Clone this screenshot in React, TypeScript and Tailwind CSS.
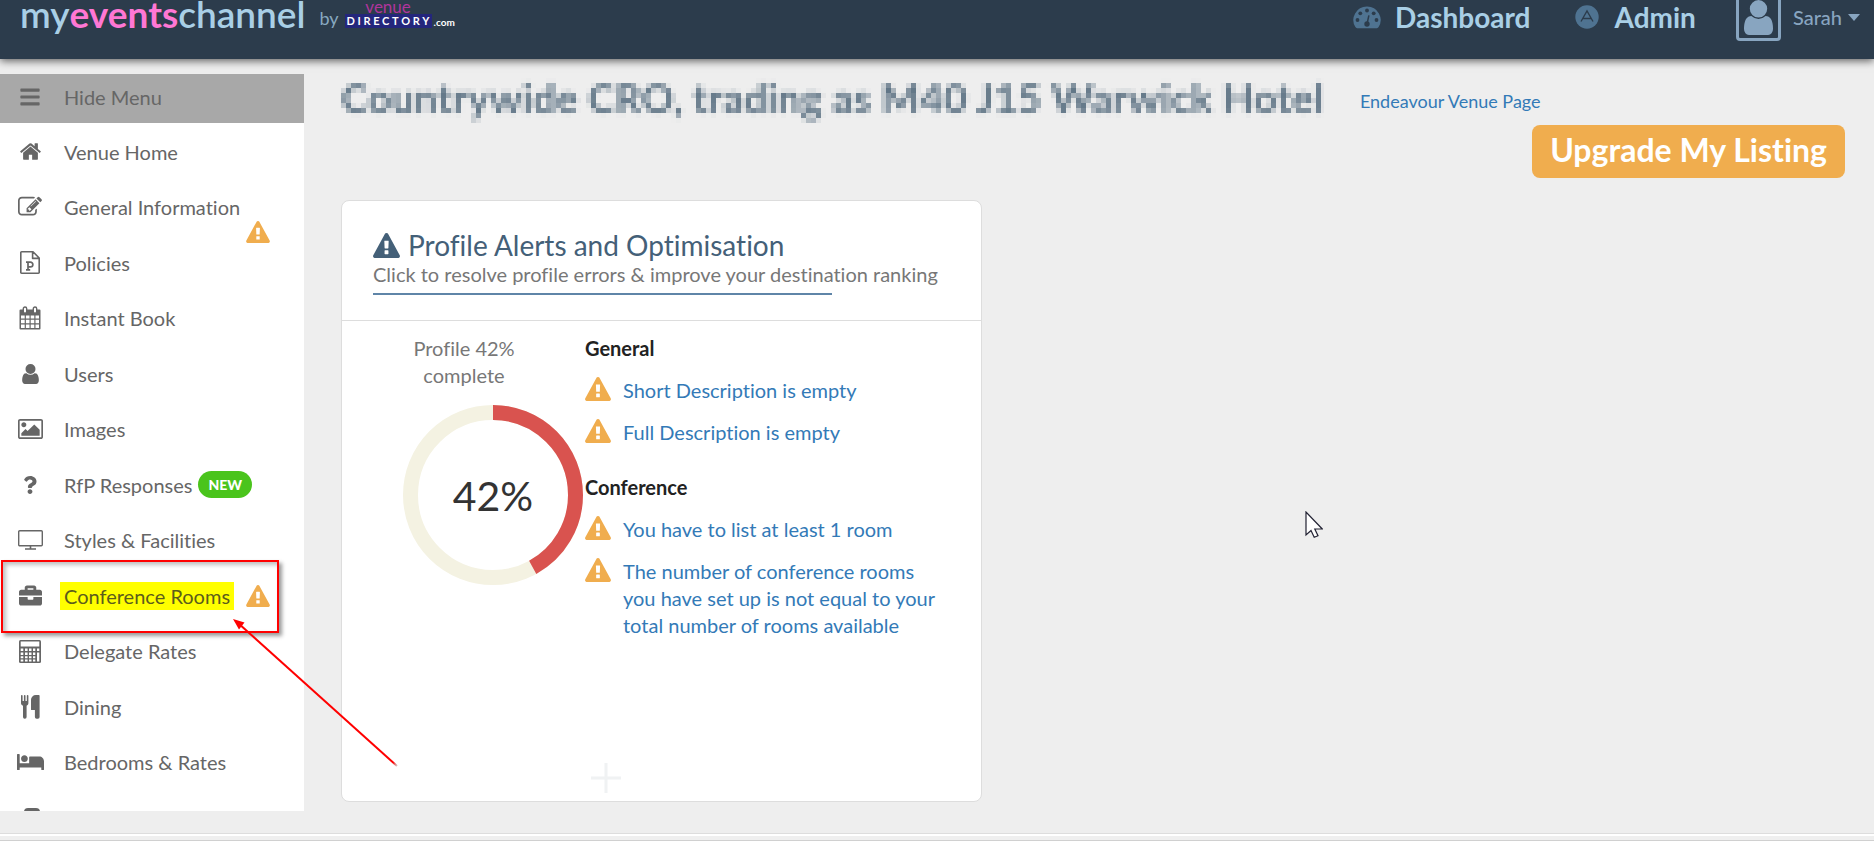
import type { ReactNode } from 'react';
import { FaBars, FaBed, FaBriefcase, FaQuestion } from 'react-icons/fa';

type GlyphProps = { className?: string };

function Warning({ className = '' }: GlyphProps) {
  return (
    <svg viewBox="0 0 1792 1664" fill="currentColor" aria-hidden="true" className={`shrink-0 ${className}`}>
      <path d="M1024 1375v-190q0-14-9.5-23.5t-22.5-9.5h-192q-13 0-22.5 9.5t-9.5 23.5v190q0 14 9.5 23.5t22.5 9.5h192q13 0 22.5-9.5t9.5-23.5zm-2-374l18-459q0-12-10-19-13-11-24-11h-220q-11 0-24 11-10 7-10 21l17 457q0 10 10 16.5t24 6.5h185q14 0 23.5-6.5t10.5-16.5zm-14-934l768 1408q35 63-2 126-17 29-46.5 46t-63.5 17h-1536q-34 0-63.5-17t-46.5-46q-37-63-2-126l768-1408q17-31 47-49t65-18 65 18 47 49z" />
    </svg>
  );
}

function Home() {
  return (
    <svg viewBox="0 0 1792 1792" fill="currentColor" className="size-[23px]">
      <path d="M1472 992v480q0 26-19 45t-45 19h-384v-384h-256v384h-384q-26 0-45-19t-19-45v-480q0-1 .5-3t.5-3l575-474 575 474q1 2 1 6zm223-69l-62 74q-8 9-21 11h-3q-13 0-21-7l-692-577-692 577q-12 8-24 7-13-2-21-11l-62-74q-8-10-7-23.5t11-21.5l719-599q32-26 76-26t76 26l244 204v-195q0-14 9-23t23-9h192q14 0 23 9t9 23v408l219 182q10 8 11 21.5t-7 23.5z" />
    </svg>
  );
}

function Edit() {
  return (
    <svg viewBox="0 0 1792 1792" fill="currentColor" className="size-6">
      <path d="M888 1184l116-116-152-152-116 116v56h96v96h56zm440-720q-16-16-33 1l-350 350q-17 17-1 33t33-1l350-350q17-17 1-33zm80 594v190q0 119-84.5 203.5t-203.5 84.5h-832q-119 0-203.5-84.5t-84.5-203.5v-832q0-119 84.5-203.5t203.5-84.5h832q63 0 117 25 15 7 18 23 3 17-9 29l-49 49q-14 14-32 8-23-6-45-6h-832q-66 0-113 47t-47 113v832q0 66 47 113t113 47h832q66 0 113-47t47-113v-126q0-13 9-22l64-64q15-15 35-7t20 29zm-96-738l288 288-672 672h-288v-288zm444 132l-92 92-288-288 92-92q28-28 68-28t68 28l152 152q28 28 28 68t-28 68z" />
    </svg>
  );
}

function PolicyFile() {
  return (
    <svg viewBox="0 0 20 23" fill="none" stroke="currentColor" strokeWidth="1.6" className="h-[23px] w-5">
      <path d="M1.6.8H13l6.2 6.2v14.4a.8.8 0 0 1-.8.8H1.6a.8.8 0 0 1-.8-.8V1.600a.8.800 0 0 1 .8-.8zM12.600.8v6.6h6.600" strokeLinejoin="round" />
      <path d="M6 11.200h4.500a2.300 2.300 0 0 1 0 4.700H8M8 11.200v7.600M6 18.900h4.200" strokeWidth="1.700" />
    </svg>
  );
}

function CalendarGrid() {
  return (
    <svg viewBox="0 0 22 24" className="h-6 w-[22px]">
      <path d="M1.500 3.500h19a1 1 0 0 1 1 1V22.500a1 1 0 0 1-1 1h-19a1 1 0 0 1-1-1V4.500a1 1 0 0 1 1-1z" fill="currentColor" />
      <path d="M2 9.500h3.700v3H2zM6.900 9.500h3.600v3H6.900zM11.700 9.500h3.600v3h-3.600zM16.500 9.500H20v3h-3.500zM2 13.800h3.700v3.400H2zM6.900 13.800h3.600v3.400H6.900zM11.700 13.800h3.600v3.400h-3.600zM16.500 13.800H20v3.400h-3.500zM2 18.500h3.700V22H2zM6.900 18.500h3.600V22H6.900zM11.700 18.500h3.600V22h-3.600zM16.500 18.500H20V22h-3.500z" fill="#fff" />
      <rect x="4.300" y="1" width="3.400" height="6.200" rx="1.700" fill="#fff" stroke="currentColor" strokeWidth="1.400" />
      <rect x="14.300" y="1" width="3.400" height="6.200" rx="1.700" fill="#fff" stroke="currentColor" strokeWidth="1.400" />
    </svg>
  );
}

function Person({ className = '' }: GlyphProps) {
  return (
    <svg viewBox="256 128 1280 1536" fill="currentColor" className={className}>
      <path d="M1536 1399q0 109-62.500 187t-150.500 78h-854q-88 0-150.500-78t-62.500-187q0-85 8.500-160.500t31.500-152 58.500-131 94-89 134.500-34.500q131 128 313 128t313-128q76 0 134.500 34.500t94 89 58.500 131 31.500 152 8.500 160.500zm-256-887q0 159-112.500 271.500t-271.500 112.500-271.500-112.500-112.500-271.500 112.500-271.500 271.500-112.500 271.500 112.500 112.500 271.500z" />
    </svg>
  );
}

function Picture() {
  return (
    <svg viewBox="-64 128 1920 1536" fill="currentColor" className="h-5 w-[25px]">
      <path d="M576 576q0 80-56 136t-136 56-136-56-56-136 56-136 136-56 136 56 56 136zm1024 384v448h-1408v-192l320-320 160 160 512-512zm96-704h-1600q-13 0-22.500 9.500t-9.500 22.500v1216q0 13 9.500 22.500t22.500 9.500h1600q13 0 22.500-9.500t9.500-22.500v-1216q0-13-9.500-22.500t-22.500-9.500zm160 32v1216q0 66-47 113t-113 47h-1600q-66 0-113-47t-47-113v-1216q0-66 47-113t113-47h1600q66 0 113 47t47 113z" />
    </svg>
  );
}

function Screen() {
  return (
    <svg viewBox="0 0 25 20" fill="none" stroke="currentColor" className="h-5 w-[25px]">
      <rect x=".7" y=".7" width="23.600" height="15" rx="1" strokeWidth="1.400" />
      <path d="M12.500 16v2.500M7 19h11" strokeWidth="1.600" />
    </svg>
  );
}

function CalculatorGlyph() {
  return (
    <svg viewBox="0 0 22 23" className="h-[23px] w-[22px]">
      <rect x="0" y="0" width="22" height="23" rx="1.500" fill="currentColor" />
      <path d="M1.700 1.600h18.600v5H1.700zM1.700 8.600h2.600v2.300H1.700zM6 8.600h2.600v2.300H6zM10 8.600h2.500v2.300H10zM14 8.600h2.300v2.300H14zM18 8.600h2.300v2.300H18zM1.700 12.600h2.600v2.300H1.700zM6 12.600h2.600v2.300H6zM10 12.600h2.500v2.300H10zM14 12.600h2.300v2.300H14zM1.700 16.200h2.600v2H1.700zM6 16.200h2.600v2H6zM10 16.200h2.500v2H10zM14 16.200h2.300v2H14zM1.700 19.600h2.600v2H1.700zM6 19.600h2.600v2H6zM10 19.600h2.500v2H10zM14 19.600h2.300v2H14zM18 12.600h2.300v9H18z" fill="#fff" />
    </svg>
  );
}

function Cutlery() {
  return (
    <svg viewBox="0 0 19 24" fill="currentColor" className="h-6 w-[19px]">
      <path d="M0 .8a.8.8 0 0 1 1.600 0V6h1.300V.8a.8.800 0 0 1 1.600 0V6h1.300V.8a.8.800 0 0 1 1.600 0v7.400c0 1.200-.8 2-1.800 2.500v11.400a1.700 1.700 0 0 1-1.700 1.700h-.2a1.700 1.700 0 0 1-1.700-1.700V10.700C.8 10.200 0 9.400 0 8.200zM18.600.8v21.300a1.700 1.700 0 0 1-1.700 1.700h-1.300a1.700 1.700 0 0 1-1.700-1.700v-7h-3.300a.6.600 0 0 1-.6-.6V4.800A4.800 4.800 0 0 1 14.800 0h3a.8.800 0 0 1 .8.8z" />
    </svg>
  );
}

function Gauge() {
  return (
    <svg viewBox="0 0 28 23" className="h-[23px] w-7">
      <path d="M14 .5a13.500 13.500 0 0 1 11.600 20.600c-.4.700-.9 1.100-1.700 1.100H4.100c-.8 0-1.300-.4-1.700-1.100A13.500 13.500 0 0 1 14 .5z" fill="#4f7391" />
      <g fill="#2c3c4c">
        <circle cx="4.500" cy="14" r="1.900" />
        <circle cx="7.300" cy="7.300" r="1.900" />
        <circle cx="14" cy="4.500" r="1.900" />
        <circle cx="20.700" cy="7.300" r="1.900" />
        <circle cx="23.500" cy="14" r="1.900" />
        <circle cx="14" cy="18" r="2.700" />
      </g>
      <path d="M14 18l1.900-8.600" stroke="#2c3c4c" strokeWidth="1.500" />
    </svg>
  );
}

function AdminBadge() {
  return (
    <svg viewBox="0 0 24 24" className="size-6">
      <circle cx="12" cy="12" r="11.700" fill="#4f7391" />
      <path d="M6 16.500l6-10.500 6 10.500M8 13.500h8" fill="none" stroke="#2c3c4c" strokeWidth="1.400" />
    </svg>
  );
}

type Item = { label: string; icon: ReactNode; alert?: 'inline' | 'below'; isNew?: boolean; marked?: boolean };

const items: Item[] = [
  { label: 'Venue Home', icon: <Home /> },
  { label: 'General Information', icon: <Edit />, alert: 'below' },
  { label: 'Policies', icon: <PolicyFile /> },
  { label: 'Instant Book', icon: <CalendarGrid /> },
  { label: 'Users', icon: <Person className="h-5 w-[17px]" /> },
  { label: 'Images', icon: <Picture /> },
  { label: 'RfP Responses', icon: <FaQuestion className="size-[18px]" />, isNew: true },
  { label: 'Styles & Facilities', icon: <Screen /> },
  { label: 'Conference Rooms', icon: <FaBriefcase className="size-[23px]" />, alert: 'inline', marked: true },
  { label: 'Delegate Rates', icon: <CalculatorGlyph /> },
  { label: 'Dining', icon: <Cutlery /> },
  { label: 'Bedrooms & Rates', icon: <FaBed className="h-[22px] w-[27px]" /> },
];

function Sidebar() {
  return (
    <aside className="relative h-[737px] w-[304px] shrink-0 text-[20px] text-[#666]">
      <div className="h-full overflow-hidden bg-white">
        <button type="button" className="flex h-[49px] w-full items-center bg-[#a8a8a8] pb-1 text-left">
          <span className="ml-2 flex w-11 justify-center">
            <FaBars className="size-[22px]" />
          </span>
          <span className="ml-3">Hide Menu</span>
        </button>
        <ul className="pt-px">
          {items.map((item) => (
            <li key={item.label} className="h-[55px] even:h-14">
              <a href="#" className="flex h-full items-center pr-[34px]">
                <span className="ml-2 flex w-11 shrink-0 justify-center">{item.icon}</span>
                {item.marked ? (
                  <span className="ml-2 bg-[#ff0] px-1 leading-7 text-[#5c5c1c]">{item.label}</span>
                ) : (
                  <span className="ml-3 whitespace-nowrap">{item.label}</span>
                )}
                {item.isNew && (
                  <span className="ml-1.5 rounded-full bg-[#4ac41c] px-[10px] text-[14px] leading-[27px] font-black text-white">NEW</span>
                )}
                {item.alert === 'inline' && <Warning className="ml-auto h-[22px] w-6 text-[#f0ad4e]" />}
                {item.alert === 'below' && <Warning className="-mb-2 ml-auto h-[22px] w-6 self-end text-[#f0ad4e]" />}
              </a>
            </li>
          ))}
          <li className="flex h-14 pt-[18px] pl-6">
            <span className="h-5 w-4 rounded bg-[#666]" />
          </li>
        </ul>
      </div>
      <div className="pointer-events-none absolute top-[486px] left-px h-[73px] w-[278px] border-2 border-[#f00] shadow-[3px_3px_4px_rgba(0,0,0,0.4),inset_3px_3px_4px_rgba(0,0,0,0.25)]" />
      <svg className="pointer-events-none absolute top-[540px] left-[228px] h-[160px] w-[180px]" viewBox="0 0 180 160">
        <defs>
          <linearGradient id="tail" gradientUnits="userSpaceOnUse" x1="5" y1="5" x2="170" y2="153">
            <stop offset="0.970" stopColor="#f00" />
            <stop offset="1" stopColor="#999" stopOpacity="0.300" />
          </linearGradient>
        </defs>
        <path d="M10 9L169 152" stroke="url(#tail)" strokeWidth="2" />
        <path d="M5 5l11.500 3.500-5.500 7z" fill="#f00" />
      </svg>
    </aside>
  );
}

function AlertLink({ children }: { children: ReactNode }) {
  return (
    <li>
      <a href="#" className="flex gap-3 text-[#337ab7]">
        <Warning className="h-6 w-[26px] text-[#f0ad4e]" />
        <span>{children}</span>
      </a>
    </li>
  );
}

function ProfileCard() {
  return (
    <section className="flex h-[602px] w-[641px] flex-col rounded-lg border border-[#ddd] bg-white">
      <header className="border-b border-[#ddd] px-[31px] pt-[26px] pb-[25px]">
        <h2 className="flex h-9 items-center gap-2 text-[28px] text-[#446078]">
          <Warning className="h-[25px] w-[27px]" />
          Profile Alerts and Optimisation
        </h2>
        <p className="text-[20px] leading-[22px] whitespace-nowrap text-[#777]">
          Click to resolve profile errors &amp; improve your destination ranking
        </p>
        <div className="mt-2 h-0.5 w-[459px] bg-[#5f85a8]" />
      </header>
      <div className="flex text-[20px] leading-[27px]">
        <div className="ml-[61px] w-[182px] pt-3.5">
          <p className="w-[122px] text-center text-[#777]">
            Profile 42%
            <br />
            complete
          </p>
          <div className="mt-4 grid size-[180px] place-items-center">
            <svg viewBox="0 0 180 180" className="col-start-1 row-start-1 size-full -rotate-90">
              <circle cx="90" cy="90" r="82.500" fill="none" stroke="#f4f2e2" strokeWidth="15" />
              <circle cx="90" cy="90" r="82.500" fill="none" stroke="#d9534f" strokeWidth="15" pathLength="100" strokeDasharray="42 58" />
            </svg>
            <span className="col-start-1 row-start-1 text-[41px] text-[#333]">42%</span>
          </div>
        </div>
        <div className="flex w-[370px] flex-col pt-3.5">
          <h3 className="font-bold text-[#222]">General</h3>
          <ul className="mt-[15px] flex flex-col gap-[15px]">
            <AlertLink>Short Description is empty</AlertLink>
            <AlertLink>Full Description is empty</AlertLink>
          </ul>
          <h3 className="mt-7 font-bold text-[#222]">Conference</h3>
          <ul className="mt-[15px] flex flex-col gap-[15px]">
            <AlertLink>You have to list at least 1 room</AlertLink>
            <AlertLink>
              The number of conference rooms
              <br />
              you have set up is not equal to your
              <br />
              total number of rooms available
            </AlertLink>
          </ul>
        </div>
      </div>
      <svg viewBox="0 0 30 30" className="mt-auto mb-2 ml-[249px] size-[30px]" stroke="#f0f2f3" strokeWidth="3">
        <path d="M15 0v30M0 15h30" />
      </svg>
    </section>
  );
}

export default function App() {
  return (
    <div className="relative flex min-h-screen flex-col overflow-hidden bg-[#eee] font-[Trebuchet_MS,Lato,sans-serif] [font-variant-ligatures:none]">
      <header className="relative z-10 flex h-[59px] items-start bg-[#2c3c4c] pr-[14px] pl-5 shadow-[0_2px_8px_rgba(0,0,0,0.6)]">
        <a href="#" className="flex h-7 items-center text-[37px] leading-7 font-semibold text-[#a9cfe6]">
          <span>my</span>
          <span className="font-bold text-[#ff77d4]">events</span>
          <span>channel</span>
        </a>
        <span className="mt-2 ml-3.5 text-[18px] leading-5 text-[#88a9c0]">by</span>
        <div className="ml-1.5 flex items-end text-white">
          <div className="flex flex-col items-center">
            <span className="text-[17px] leading-[14px] text-[#b0359c]">venue</span>
            <span className="flex w-[87px] justify-between bg-[#24267c] px-0.5 text-[11px] leading-[14px] font-bold">
              {'DIRECTORY'.split('').map((letter, i) => (
                <span key={i}>{letter}</span>
              ))}
            </span>
          </div>
          <span className="ml-0.5 text-[10px] leading-[12px] font-bold">.com</span>
        </div>
        <nav className="ml-auto flex text-[28px] font-bold text-[#a9cfe6]">
          <a href="#" className="flex h-[34px] items-center gap-[14px]">
            <Gauge />
            Dashboard
          </a>
          <a href="#" className="ml-11 flex h-[34px] items-center gap-4">
            <AdminBadge />
            Admin
          </a>
        </nav>
        <button type="button" className="ml-10 flex text-[20px] text-[#88a5c0]">
          <span className="-mt-1 flex h-[45px] w-[45px] items-end justify-center rounded border-[3px] border-[#88a5c0] pb-[3px]">
            <Person className="h-[35px] w-[29px]" />
          </span>
          <span className="ml-3 leading-[34px] font-medium">Sarah</span>
          <span className="mt-[14px] ml-1.5 border-x-[6px] border-t-[7px] border-x-transparent border-t-[#88a5c0]" />
        </button>
      </header>

      <div className="flex pt-[15px]">
        <Sidebar />
        <main className="min-w-0 flex-1 pl-[37px]">
          <div className="flex h-[51px] items-center">
            <svg className="absolute size-0" aria-hidden="true">
              <filter id="mosaic" x="0" y="0" width="100%" height="100%" colorInterpolationFilters="sRGB">
                <feGaussianBlur in="SourceGraphic" stdDeviation="1.800" result="soft" />
                <feFlood x="2" y="2" width="1" height="1" />
                <feComposite width="5" height="5" />
                <feTile result="grid" />
                <feComposite in="soft" in2="grid" operator="in" />
                <feMorphology operator="dilate" radius="2" />
              </filter>
            </svg>
            <h1 className="pb-1 text-[41px] leading-[50px] font-bold whitespace-nowrap text-[#5f7485] filter-[url(#mosaic)]">
              Countrywide CRO, trading as M40 J15 Warwick Hotel
            </h1>
            <a href="#" className="ml-9 pt-1 text-[18px] whitespace-nowrap text-[#337ab7]">
              Endeavour Venue Page
            </a>
          </div>
          <div className="flex justify-end pr-[29px]">
            <button type="button" className="h-[53px] rounded-lg bg-[#f0ad4e] px-[18px] pb-1 text-[32px] leading-[49px] font-bold text-white">
              Upgrade My Listing
            </button>
          </div>
          <div className="pt-[22px]">
            <ProfileCard />
          </div>
        </main>
      </div>

      <div className="mt-auto h-2 border-t border-b border-t-[#ddd] border-b-[#d0d0d0] bg-[#efefef]">
        <div className="h-0.5 bg-white" />
      </div>

      <svg viewBox="0 0 18 28" className="pointer-events-none absolute top-[511px] left-[1305px] h-7 w-[18px]">
        <path d="M1 1v23l5-4.500 3.200 6.800 3.800-1.500-3.200-6.800h7.500z" fill="#fff" stroke="#223" strokeWidth="1.200" />
      </svg>
    </div>
  );
}
